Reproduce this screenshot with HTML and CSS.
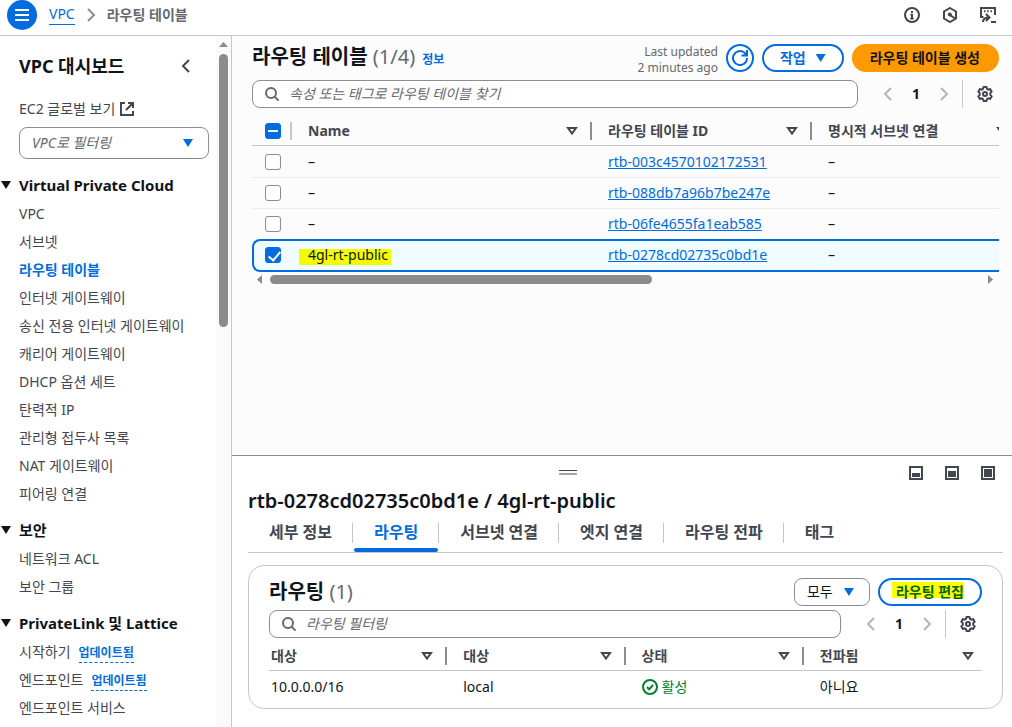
FILE: index.html
```html
<!DOCTYPE html>
<html lang="ko">
<head>
<meta charset="utf-8">
<title>라우팅 테이블 | VPC</title>
<link rel="stylesheet" href="styles.css">
</head>
<body>
<svg class="defs" aria-hidden="true">
  <symbol id="left" viewBox="0 0 16 16"><path d="M11 2 5 8l6 6"/></symbol>
  <symbol id="right" viewBox="0 0 16 16"><path d="m5 2 6 6-6 6"/></symbol>
  <symbol id="search" viewBox="0 0 16 16"><circle cx="7" cy="7" r="5"/><path d="m10.6 10.6 4 4"/></symbol>
  <symbol id="filter" viewBox="0 0 12 10"><path d="M2 2h8L6 7.5z"/></symbol>
  <symbol id="gear" viewBox="0 0 16 16"><path d="M6.6 1h2.8l.6 1.8 1.3.8 1.9-.4 1.4 2.4-1.3 1.5v1.8l1.3 1.5-1.4 2.4-1.9-.4-1.3.8-.6 1.8H6.6L6 13.2l-1.3-.8-1.9.4-1.4-2.4 1.3-1.5V7.1L1.4 5.6l1.4-2.4 1.9.4L6 2.8z"/><circle cx="8" cy="8" r="2"/></symbol>
</svg>

<header class="topbar">
  <button class="menu" aria-label="메뉴"><svg viewBox="0 0 16 16"><path d="M1 3h14M1 8h14M1 13h14"/></svg></button>
  <nav class="crumbs" aria-label="이동 경로">
    <a href="#">VPC</a>
    <svg class="icon pale"><use href="#right"/></svg>
    <span>라우팅 테이블</span>
  </nav>
  <div class="tools">
    <button aria-label="정보"><svg class="icon" viewBox="0 0 16 16"><circle cx="8" cy="8" r="7"/><path d="M8 7v5M8 4v2M6.5 7.8H8M6.3 11.500h3.400"/></svg></button>
    <button aria-label="Amazon Q"><svg class="icon" viewBox="0 0 16 16"><path d="M8 1 14 4.500v7L8 15l-6-3.500v-7z"/><circle class="solid" cx="7.800" cy="7.500" r="2"/><path d="m8 8 5 3.500"/></svg></button>
    <button aria-label="CloudShell"><svg class="icon" viewBox="0 0 16 16"><path d="M3.500 10H1V1h14v7M4 4.200h1.500M7.200 4.200h1.500M10.500 4.200H12M3 15c0-3 1.500-4.500 6-4.500M6 7l3.500 3.500L6 14M11 15h5"/></svg></button>
  </div>
</header>

<div class="body">
  <aside class="sidebar">
    <div class="side-content">
      <div class="side-head"><h2>VPC 대시보드</h2><button aria-label="닫기"><svg class="icon"><use href="#left"/></svg></button></div>
      <a class="external" href="#">EC2 글로벌 보기 <svg class="icon" viewBox="0 0 16 16"><path d="M6 2H2v12h12v-4M9 2h5v5M14 2 7 9"/></svg></a>
      <div class="select wide"><select aria-label="VPC로 필터링"><option>VPC로 필터링</option></select></div>
      <section>
        <h3>Virtual Private Cloud</h3>
        <ul>
          <li><a href="#">VPC</a></li>
          <li><a href="#">서브넷</a></li>
          <li><a class="current" href="#" aria-current="page">라우팅 테이블</a></li>
          <li><a href="#">인터넷 게이트웨이</a></li>
          <li><a href="#">송신 전용 인터넷 게이트웨이</a></li>
          <li><a href="#">캐리어 게이트웨이</a></li>
          <li><a href="#">DHCP 옵션 세트</a></li>
          <li><a href="#">탄력적 IP</a></li>
          <li><a href="#">관리형 접두사 목록</a></li>
          <li><a href="#">NAT 게이트웨이</a></li>
          <li><a href="#">피어링 연결</a></li>
        </ul>
      </section>
      <section>
        <h3>보안</h3>
        <ul>
          <li><a href="#">네트워크 ACL</a></li>
          <li><a href="#">보안 그룹</a></li>
        </ul>
      </section>
      <section>
        <h3>PrivateLink 및 Lattice</h3>
        <ul>
          <li><a href="#">시작하기</a><span class="updated">업데이트됨</span></li>
          <li><a href="#">엔드포인트</a><span class="updated">업데이트됨</span></li>
          <li><a href="#">엔드포인트 서비스</a></li>
        </ul>
      </section>
    </div>
    <div class="vscroll"><i class="arrow up"></i><div class="thumb"></div></div>
  </aside>

  <main>
    <div class="list">
      <div class="list-head">
        <h1>라우팅 테이블 <span>(1/4)</span></h1>
        <a class="info" href="#">정보</a>
        <p class="stamp">Last updated<br>2 minutes ago</p>
        <button class="refresh" aria-label="새로 고침"><svg viewBox="0 0 16 16"><path d="M15 8A7 7 0 1 1 12.500 2.700L14.500 5M15 0v5.500H9.500"/></svg></button>
        <button class="btn outline drop">작업</button>
        <button class="btn primary">라우팅 테이블 생성</button>
      </div>
      <div class="filter-row">
        <label class="search"><svg class="icon"><use href="#search"/></svg><input type="text" aria-label="찾기" placeholder="속성 또는 태그로 라우팅 테이블 찾기"></label>
        <div class="pager"><button aria-label="이전"><svg class="icon"><use href="#left"/></svg></button><b>1</b><button aria-label="다음"><svg class="icon"><use href="#right"/></svg></button></div>
        <button class="settings" aria-label="기본 설정"><svg class="icon"><use href="#gear"/></svg></button>
      </div>
      <div class="table-wrap">
        <table class="tables">
          <colgroup><col class="c-check"><col class="c-name"><col class="c-id"><col class="c-sub"></colgroup>
          <thead><tr>
            <th class="check light"><input class="some" type="checkbox" aria-label="모두 선택"></th>
            <th><div class="th">Name<svg class="filter"><use href="#filter"/></svg></div></th>
            <th><div class="th">라우팅 테이블 ID<svg class="filter"><use href="#filter"/></svg></div></th>
            <th><div class="th">명시적 서브넷 연결<svg class="filter"><use href="#filter"/></svg></div></th>
          </tr></thead>
          <tbody>
            <tr><td class="check"><input type="checkbox" aria-label="선택"></td><td>–</td><td><a href="#">rtb-003c4570102172531</a></td><td>–</td></tr>
            <tr><td class="check"><input type="checkbox" aria-label="선택"></td><td>–</td><td><a href="#">rtb-088db7a96b7be247e</a></td><td>–</td></tr>
            <tr><td class="check"><input type="checkbox" aria-label="선택"></td><td>–</td><td><a href="#">rtb-06fe4655fa1eab585</a></td><td>–</td></tr>
            <tr class="selected"><td class="check"><input type="checkbox" aria-label="선택" checked></td><td><mark class="name-mark">4gl-rt-public</mark></td><td><a href="#">rtb-0278cd02735c0bd1e</a></td><td>–</td></tr>
          </tbody>
        </table>
      </div>
      <div class="hscroll"><i class="arrow prev"></i><div class="track"><div class="thumb"></div></div><i class="arrow next"></i></div>
    </div>

    <section class="panel">
      <div class="panel-bar">
        <span class="grip"></span>
        <div class="sizes">
          <button class="small" aria-label="작게"></button>
          <button class="medium" aria-label="중간"></button>
          <button class="large" aria-label="크게"></button>
        </div>
      </div>
      <h2>rtb-0278cd02735c0bd1e / 4gl-rt-public</h2>
      <div class="tabs" role="tablist">
        <button role="tab">세부 정보</button>
        <button role="tab" class="active" aria-selected="true">라우팅</button>
        <button role="tab">서브넷 연결</button>
        <button role="tab">엣지 연결</button>
        <button role="tab">라우팅 전파</button>
        <button role="tab">태그</button>
      </div>
      <div class="card">
        <div class="card-head">
          <h2>라우팅 <span>(1)</span></h2>
          <div class="select"><select aria-label="경로 유형"><option>모두</option></select></div>
          <button class="btn outline edit"><mark class="edit-mark">라우팅 편집</mark></button>
        </div>
        <div class="filter-row">
          <label class="search"><svg class="icon"><use href="#search"/></svg><input type="text" aria-label="필터" placeholder="라우팅 필터링"></label>
          <div class="pager"><button aria-label="이전"><svg class="icon"><use href="#left"/></svg></button><b>1</b><button aria-label="다음"><svg class="icon"><use href="#right"/></svg></button></div>
          <button class="settings" aria-label="기본 설정"><svg class="icon"><use href="#gear"/></svg></button>
        </div>
        <table class="routes">
          <thead><tr>
            <th><div class="th">대상<svg class="filter"><use href="#filter"/></svg></div></th>
            <th><div class="th">대상<svg class="filter"><use href="#filter"/></svg></div></th>
            <th><div class="th">상태<svg class="filter"><use href="#filter"/></svg></div></th>
            <th><div class="th">전파됨<svg class="filter"><use href="#filter"/></svg></div></th>
          </tr></thead>
          <tbody><tr>
            <td>10.0.0.0/16</td><td>local</td>
            <td><span class="ok"><svg class="icon" viewBox="0 0 16 16"><circle cx="8" cy="8" r="7"/><path d="m5 8 2.200 2.300L11 6"/></svg>활성</span></td>
            <td>아니요</td>
          </tr></tbody>
        </table>
      </div>
    </section>
  </main>
</div>
</body>
</html>
```
FILE: styles.css
```css
* { box-sizing: border-box; }

body {
  margin: 0;
  height: 100vh;
  display: flex;
  flex-direction: column;
  overflow: hidden;
  background: #fff;
  color: #0f141a;
  font: 14px/20px "Noto Sans", "Noto Sans CJK KR", sans-serif;
}

h1, h2, h3, p, ul { margin: 0; padding: 0; }
ul { list-style: none; }
a { color: #006ce0; }
button, input, select { font: inherit; color: inherit; }
button { padding: 0; border: 0; background: none; }
.defs { display: none; }

.icon {
  flex: none;
  width: 16px;
  height: 16px;
  display: block;
  fill: none;
  stroke: currentColor;
  stroke-width: 2;
}
.icon .solid { fill: currentColor; stroke: none; }
.pale { color: #8c8c94; }

/* Top bar */
.topbar {
  flex: none;
  height: 36px;
  padding: 0 16px 6px 7px;
  display: flex;
  align-items: center;
  border-bottom: 1px solid #c6c6cd;
}
.menu {
  width: 30px;
  height: 30px;
  border-radius: 50%;
  background: #006ce0;
  display: grid;
  place-items: center;
}
.menu svg { width: 16px; height: 16px; stroke: #fff; stroke-width: 2; }
.crumbs { margin-left: 12px; display: flex; align-items: center; gap: 8px; color: #656871; font-weight: 700; }
.crumbs a { font-weight: 400; text-decoration: none; border-bottom: 1px solid; }
.tools { margin-left: auto; display: flex; gap: 22px; color: #424650; }

.body { flex: 1; min-height: 0; display: flex; }

/* Sidebar */
.sidebar { flex: none; width: 232px; display: flex; overflow: hidden; border-right: 1px solid #c6c6cd; }
.side-content { flex: 1; padding: 16px 7px 0 19px; color: #424650; }
.side-head { display: flex; justify-content: space-between; align-items: center; height: 28px; padding-right: 15px; }
.side-head h2 { font-size: 18px; line-height: 28px; color: #0f141a; }
.external { display: flex; align-items: center; gap: 4px; margin-top: 19px; color: inherit; text-decoration: none; }
.side-content .wide { margin: 8px 0 12px; }
.side-content section + section { margin-top: 8px; }
.side-content h3 { position: relative; padding-bottom: 1px; font-size: 15px; line-height: 28px; color: #0f141a; }
.side-content h3::before {
  content: "";
  position: absolute;
  left: -18px;
  top: 10px;
  width: 10px;
  height: 8px;
  background: #0f141a;
  clip-path: polygon(0 0, 100% 0, 50% 100%);
}
.side-content li { height: 28px; line-height: 28px; white-space: nowrap; }
.side-content li a { color: inherit; text-decoration: none; }
.side-content li a.current { color: #006ce0; font-weight: 700; }
.updated {
  display: inline-block;
  margin-left: 8px;
  font-size: 12px;
  line-height: 18px;
  font-weight: 700;
  color: #006ce0;
  border-bottom: 1px dashed;
}

.select { position: relative; }
.select select {
  appearance: none;
  display: block;
  width: 76px;
  height: 28px;
  padding: 0 12px;
  border: 1px solid #8c8c94;
  border-radius: 8px;
  background: #fff;
  color: #0f141a;
}
.select.wide select { width: 100%; height: 32px; font-style: italic; color: #656871; }
.select::after, .drop::after {
  content: "";
  width: 10px;
  height: 8px;
  background: #006ce0;
  clip-path: polygon(0 0, 100% 0, 50% 100%);
}
.select::after { position: absolute; right: 16px; top: 50%; margin-top: -4px; pointer-events: none; }

.vscroll { flex: none; width: 15px; padding-top: 6px; background: #fafafa; display: flex; flex-direction: column; align-items: center; gap: 7px; }
.thumb { background: #8b8b8b; border-radius: 5px; }
.vscroll .thumb { width: 9px; height: 273px; }
.arrow { flex: none; background: #8b8b8b; }
.up { width: 9px; height: 5px; clip-path: polygon(50% 0, 100% 100%, 0 100%); }
.prev { width: 5px; height: 9px; clip-path: polygon(0 50%, 100% 0, 100% 100%); }
.next { width: 5px; height: 9px; clip-path: polygon(0 0, 100% 50%, 0 100%); }

/* Route table list */
main { flex: 1; min-width: 0; display: flex; flex-direction: column; }
.list { flex: 1; min-height: 0; padding: 8px 13px 0 20px; background: #fcfcfd; }
.list-head { display: flex; align-items: center; height: 28px; }
h1, .card h2 { font-size: 20px; line-height: 28px; white-space: nowrap; }
h1 { padding-bottom: 2px; }
h1 span, .card h2 span { font-weight: 400; color: #656871; }
.info { margin: 4px 0 0 7px; font-size: 12px; font-weight: 700; text-decoration: none; }
.stamp { margin: 4px 8px 0 auto; font-size: 12px; line-height: 16px; text-align: right; color: #656871; }
.refresh { width: 28px; height: 28px; border: 2px solid #006ce0; border-radius: 50%; display: grid; place-items: center; background: #fff; }
.refresh svg { width: 16px; height: 16px; fill: none; stroke: #006ce0; stroke-width: 2; }
.btn { height: 28px; margin-left: 8px; padding: 0 18px; border-radius: 14px; font-weight: 700; white-space: nowrap; }
.outline { padding: 0 16px; border: 2px solid #006ce0; background: #fff; color: #006ce0; }
.drop { display: flex; align-items: center; gap: 10px; }
.primary { padding-right: 19px; background: #ff9900; color: #0f141a; }

.filter-row { display: flex; align-items: center; }
.list .filter-row { margin-top: 8px; }
.search {
  flex: 1;
  height: 28px;
  padding: 0 11px;
  display: flex;
  align-items: center;
  gap: 9px;
  border: 1px solid #8c8c94;
  border-radius: 8px;
  background: #fff;
  color: #656871;
}
.search input { flex: 1; min-width: 0; height: 20px; padding: 0; border: 0; outline: 0; background: none; }
.search input::placeholder { color: #656871; font-style: italic; opacity: 1; }
.pager { display: flex; align-items: center; gap: 16px; margin: 0 10px 0 22px; }
.pager button { color: #b4b4bb; }
.settings { height: 28px; padding: 0 6px 0 14px; border-left: 1px solid #c6c6cd; color: #424650; }
.settings .icon { stroke-width: 2; }

table { table-layout: fixed; border-collapse: separate; border-spacing: 0; }
th { padding: 0; text-align: left; color: #424650; border-bottom: 1px solid #c6c6cd; }
th:not(:last-child) { background: linear-gradient(#8c8c94, #8c8c94) right center / 2px 18px no-repeat; }
th.light { background-image: linear-gradient(#c6c6cd, #c6c6cd); }
.th { display: flex; align-items: center; justify-content: space-between; }
.filter { width: 12px; height: 10px; fill: none; stroke: #424650; stroke-width: 2; }
td { padding: 0; white-space: nowrap; }

.table-wrap { overflow: hidden; }
.tables { width: 770px; }
.c-check { width: 40px; }
.c-name { width: 300px; }
.c-id { width: 220px; }
.c-sub { width: 210px; }
.tables th { height: 38px; padding: 8px 14px 0 16px; background-position: right 14px; }
.tables td { height: 31px; padding: 0 16px; border-bottom: 1px solid #ebebf0; }
.tables tr:first-child td { height: 32px; padding-top: 1px; }
.tables tr:nth-child(3) td { height: 30px; border-bottom: 0; }
.tables .check { padding-left: 13px; padding-right: 0; }
.tables .selected td { height: 33px; padding-bottom: 1px; background-color: #f0fbff; border-top: 2px solid #006ce0; border-bottom: 2px solid #006ce0; }
.tables .selected .check { padding-left: 11px; border-left: 2px solid #006ce0; border-radius: 8px 0 0 8px; }

input[type="checkbox"] {
  appearance: none;
  position: relative;
  display: block;
  width: 16px;
  height: 16px;
  margin: 0;
  border: 1px solid #8c8c94;
  border-radius: 3px;
  background: #fff;
}
input.some, input[type="checkbox"]:checked { border-color: #006ce0; background: #006ce0; }
input.some::after { content: ""; position: absolute; left: 2px; top: 6px; width: 10px; height: 2px; background: #fff; }
input:checked::after {
  content: "";
  position: absolute;
  left: 5px;
  top: 1px;
  width: 5px;
  height: 10px;
  border: solid #fff;
  border-width: 0 2px 2px 0;
  transform: rotate(40deg);
}

mark { position: relative; z-index: 0; display: inline-block; background: none; color: inherit; }
mark::before { content: ""; position: absolute; z-index: -1; height: 16px; }
.name-mark::before { left: -9px; right: -3px; top: 4px; background: #f2fb00; }
.edit-mark { color: #006400; }
.edit-mark::before { left: -4px; right: 0; top: 0; background: #ffff00; }

.hscroll { display: flex; align-items: center; gap: 8px; padding: 0 6px 0 5px; height: 15px; }
.hscroll .track { flex: 1; }
.hscroll .thumb { width: 382px; height: 9px; }

/* Split panel */
.panel { flex: none; padding: 0 9px 18px 16px; border-top: 1px solid #8c8c94; }
.panel-bar { position: relative; display: flex; justify-content: flex-end; align-items: center; height: 31px; padding: 3px 8px 0 0; }
.grip { position: absolute; left: 311px; top: 14px; width: 18px; height: 5px; border-top: 1px solid #424650; border-bottom: 2px solid #a4a4ad; }
.sizes { display: flex; gap: 22px; }
.sizes button { width: 14px; height: 14px; border: 2px solid #424650; padding: 1px; background: #424650 content-box; }
.sizes .small { padding-top: 5px; }
.sizes .medium { padding-top: 3px; }
.panel > h2 { font-size: 20px; line-height: 28px; font-weight: 600; }
.tabs { display: flex; height: 38px; border-bottom: 1px solid #c6c6cd; }
.tabs button { position: relative; height: 37px; padding: 0 21px 3px; font-size: 16px; font-weight: 700; color: #424650; white-space: nowrap; }
.tabs button + button::before { content: ""; position: absolute; left: -1px; top: 8px; height: 20px; border-left: 1px solid #c6c6cd; }
.tabs .active { color: #006ce0; }
.tabs .active::after { content: ""; position: absolute; left: 1px; right: 1px; bottom: 0; height: 4px; border-radius: 2px; background: #006ce0; }

.card { margin-top: 12px; padding: 12px 20px 4px; border: 1px solid #c6c6cd; border-radius: 16px; }
.card-head { display: flex; align-items: center; margin-bottom: 4px; }
.card-head h2 { margin-right: auto; }
.routes { width: 100%; }
.routes th { height: 33px; padding: 4px 14px 0 16px; background-position: right 9px; }
.routes td { height: 33px; padding: 0 16px 2px; }
.routes th:first-child, .routes td:first-child { padding-left: 2px; }
.routes th:last-child { padding-right: 8px; }
.ok { display: flex; align-items: center; gap: 4px; color: #00802f; }
```
